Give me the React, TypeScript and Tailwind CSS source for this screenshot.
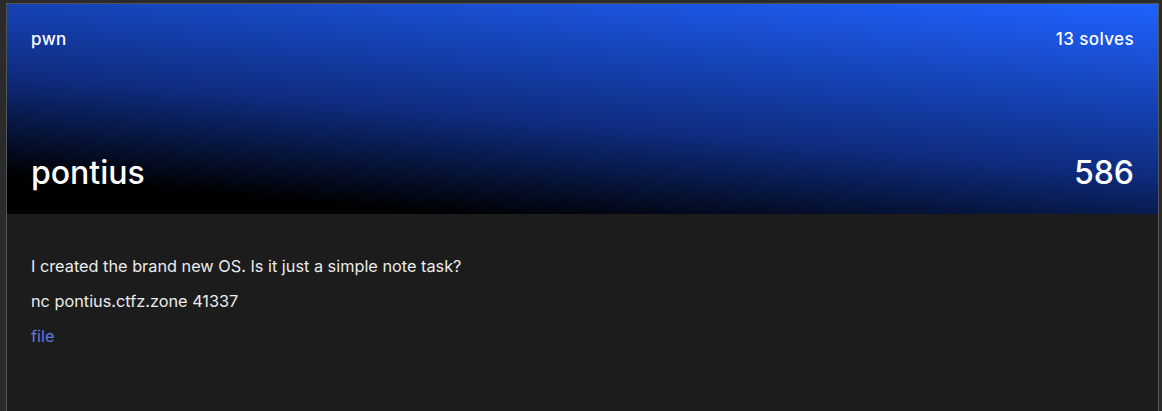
export default function App() {
  return (
    <div className="h-[411px] w-[1162px] overflow-hidden bg-[#2b2b2b] pt-[3px] pl-[6px] pr-[3px]">
      <div className="h-[430px] border border-[#555] bg-[#1c1c1c] font-['Inter',sans-serif]">
        {/* Header */}
        <header className="flex h-[210px] flex-col justify-between bg-[linear-gradient(5deg,#000_12%,#0e2c80_45%,#1f62ff_100%)] px-6 pt-[23px] pb-[23px] text-white">
          <div className="flex items-center justify-between text-[17px] leading-6 font-medium tracking-[0.4px]">
            <span>pwn</span>
            <span>13 solves</span>
          </div>
          <div className="flex items-center justify-between text-[32px] leading-9 font-medium">
            <h1>pontius</h1>
            <span>586</span>
          </div>
        </header>

        {/* Body */}
        <div className="flex flex-col gap-[11px] px-6 pt-10 text-[16.3px] leading-6 text-[#ececec]">
          <p>I created the brand new OS. Is it just a simple note task?</p>
          <p>nc pontius.ctfz.zone 41337</p>
          <a className="text-[#6279e0]">file</a>
        </div>
      </div>
    </div>
  );
}
